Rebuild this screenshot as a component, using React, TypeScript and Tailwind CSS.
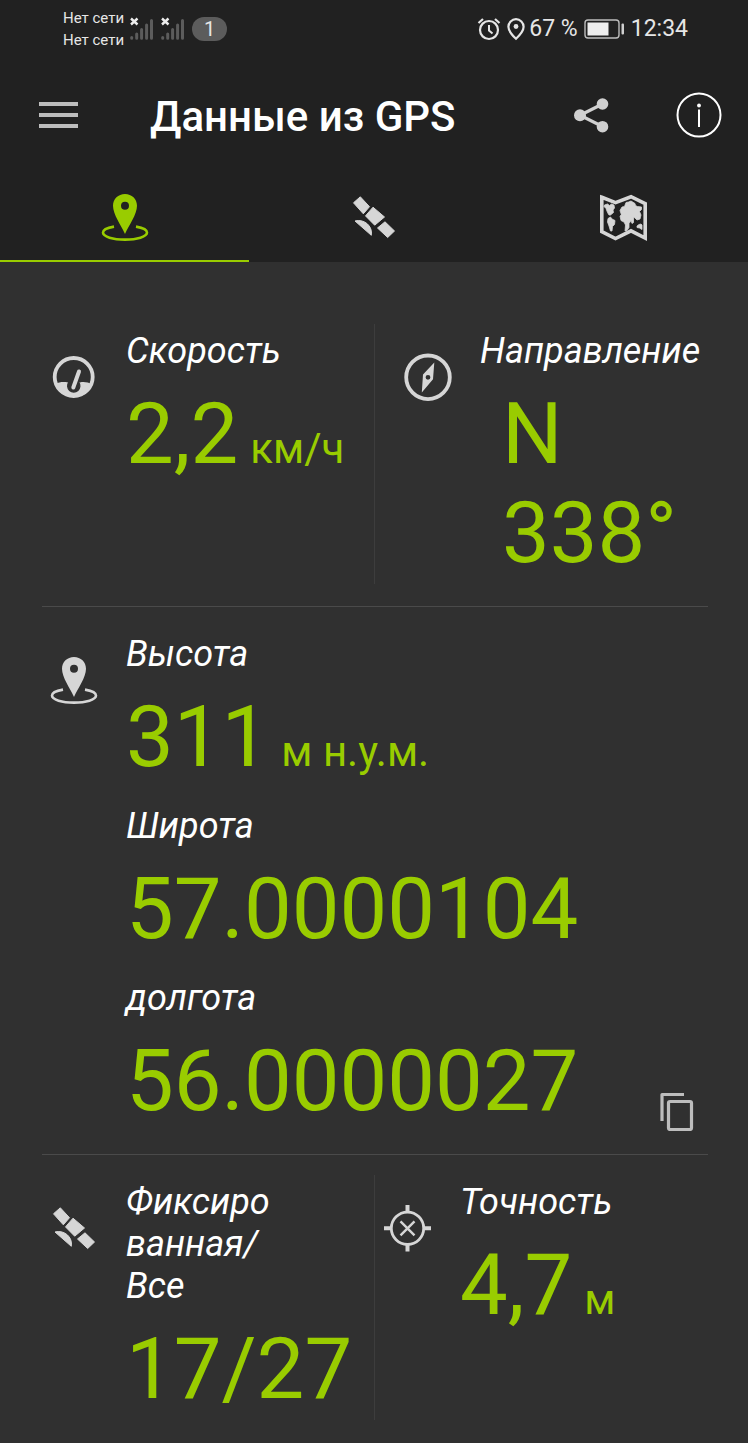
import type { ReactNode } from 'react';

function SignalIcon() {
  return (
    <svg width="24" height="24" viewBox="0 0 24 24" aria-hidden="true">
      <g stroke="#5c5c5c" strokeWidth="3" strokeLinecap="round">
        <path d="M1.7 20.5v.8M6.7 17v4.3M11.6 12.5v8.8M16.6 8v13.3M21.5 3.5v17.8" />
      </g>
      <path d="M1 1.5l6.5 6M7.5 1.5l-6.5 6" stroke="#eeeeee" strokeWidth="2.4" />
    </svg>
  );
}

function AlarmIcon() {
  return (
    <svg width="24" height="24" viewBox="0 0 24 24" fill="none" stroke="#e6e6e6" aria-hidden="true">
      <circle cx="12" cy="13" r="9" strokeWidth="2.2" />
      <path d="M12 8v5.5l3.5 3" strokeWidth="2" />
      <path d="M1.5 6l4.5-4M22.5 6l-4.5-4" strokeWidth="2.2" />
    </svg>
  );
}

function LocationIcon() {
  return (
    <svg width="18" height="24" viewBox="0 0 18 24" fill="none" aria-hidden="true">
      <path
        d="M9 2.2a7.6 7.6 0 0 0-7.6 7.6C1.4 14.5 5.5 18.5 9 21.8c3.5-3.3 7.6-7.3 7.6-12A7.6 7.6 0 0 0 9 2.2z"
        stroke="#e6e6e6"
        strokeWidth="2.2"
      />
      <circle cx="9" cy="9.5" r="2.4" fill="#e6e6e6" />
    </svg>
  );
}

function BatteryIcon() {
  return (
    <svg width="41" height="20" viewBox="0 0 41 20" fill="none" aria-hidden="true">
      <rect x="1" y="1" width="34" height="18" rx="3" stroke="#bdbdbd" strokeWidth="1.4" />
      <rect x="3.5" y="3.5" width="21" height="13" fill="#eeeeee" />
      <rect x="37.5" y="4.5" width="2.5" height="11" rx="1" fill="#cfcfcf" />
    </svg>
  );
}

function PinIcon() {
  return (
    <svg width="48" height="48" viewBox="0 0 48 48" fill="currentColor" aria-hidden="true">
      <path
        fillRule="evenodd"
        d="M24 1C17.2 1 12 6 12 12.7C12 21.5 20 32 24 41C28 32 36 21.5 36 12.7C36 6 30.8 1 24 1zM24 8.8a4 4 0 1 1 0 8a4 4 0 1 1 0-8z"
      />
      <path
        d="M13 33.6C6 34.8 2 37 2 39.6C2 43.8 12 46.6 24 46.6S46 43.8 46 39.6C46 37 42 34.8 35 33.6"
        fill="none"
        stroke="currentColor"
        strokeWidth="2.6"
      />
    </svg>
  );
}

function SatelliteIcon() {
  return (
    <svg
      width="48"
      height="48"
      viewBox="0 0 48 48"
      fill="currentColor"
      stroke="currentColor"
      strokeLinejoin="round"
      aria-hidden="true"
    >
      <path d="M3.5 9.8L10.3 3.8L19.5 13.7L13.3 20.8z" />
      <path d="M15.5 22.9L23 14.2L34.5 24L24.7 32.2z" />
      <path d="M27.5 35L35 28.8L44.5 38L37.7 44.5z" />
      <path d="M5 28C14 25.5 23 33 21.3 42.3z" />
    </svg>
  );
}

function MapIcon() {
  return (
    <svg width="48" height="48" viewBox="0 0 48 48" fill="currentColor" aria-hidden="true">
      <path
        d="M2.8 4.3L16.5 9.6L32 3.7L46.2 10.7V45L32 37.8L16.5 45.6L2.8 38.7z"
        fill="none"
        stroke="currentColor"
        strokeWidth="3.6"
      />
      <g stroke="currentColor" strokeWidth="0.8" strokeLinejoin="round">
        {/* Americas */}
        <path d="M5.5 12l3-1 2 1.500 2-1.500 2.500 1 .5 3-1.500 2 .5 2.500-3 2.500-1.500 0-1.500-2.500-1.500-4-2-2z" />
        <path d="M9 25.500l2.500-1.500 1.500 2 3 1.500-.5 4-2 2-.5 4.500-1.500 0L10 33l-1.500-4z" />
        {/* Eurasia */}
        <path d="M21 17.500l2-3.500 2.500-.5 1.500-4 2.500-.5 2.500-1 4 2.500.5 2 2 1 4 .5v2.500l-2 2 1.500 3.500-1 4-3 1-2-2-1.500-1v5.500l-1.500 1-2-6-6-1-2.500-1.500z" />
        {/* Africa */}
        <path d="M21 23l2.500-2 4-.5 4 2 1 3-1 3-1.500 2v4l-2 3-2 .5.5-6-1.500-3-3-1.500z" />
        {/* Australia */}
        <path d="M38 33l2-1.500 2-.5 1 1v4.500l-2.500-1.500-2.500-.5z" />
      </g>
    </svg>
  );
}

function SpeedIcon() {
  return (
    <svg width="48" height="48" viewBox="0 0 48 48" aria-hidden="true">
      <circle cx="23.7" cy="24" r="19" fill="none" stroke="currentColor" strokeWidth="3.8" />
      <path
        d="M5.5 31C9 29 14 28.5 18 29.5H30C34 28.5 38 29.5 42 31C39 40 32 44 23.7 44S8.5 40 5.5 31z"
        fill="currentColor"
      />
      <path d="M19 29.3a6 6 0 1 0 9.5 0z" fill="#303030" stroke="#303030" strokeWidth="1.5" />
      <path d="M29 18.5L23.3 34.5" stroke="currentColor" strokeWidth="4" strokeLinecap="round" />
    </svg>
  );
}

function CompassIcon() {
  return (
    <svg width="48" height="48" viewBox="0 0 48 48" aria-hidden="true">
      <circle cx="24" cy="24.3" r="21.8" fill="none" stroke="currentColor" strokeWidth="3.8" />
      <path
        fillRule="evenodd"
        d="M30.3 9.5L29 26.2L17.8 39.5L19 21.5zM24 21.9a2.4 2.4 0 1 0 0 4.8a2.4 2.4 0 1 0 0-4.8z"
        fill="currentColor"
      />
    </svg>
  );
}

function AccuracyIcon() {
  return (
    <svg width="48" height="48" viewBox="0 0 48 48" fill="none" stroke="currentColor" aria-hidden="true">
      <circle cx="23.5" cy="24.3" r="16.2" strokeWidth="2.8" />
      <path d="M23.5 1v7M23.5 40.6v7M0 24.3h7M40 24.3h7" strokeWidth="4" />
      <path d="M16.5 17.3l14 14M30.5 17.3l-14 14" strokeWidth="2.4" />
    </svg>
  );
}

function CopyIcon() {
  return (
    <svg
      width="36"
      height="40"
      viewBox="0 0 36 40"
      fill="none"
      stroke="currentColor"
      strokeWidth="3.2"
      strokeLinejoin="round"
      aria-hidden="true"
    >
      <path d="M26 3.5H4V30" />
      <rect x="10.5" y="10.5" width="23" height="28" rx="1.5" />
    </svg>
  );
}

const tabs = [
  { id: 'location', label: 'Местоположение', icon: <PinIcon />, active: true },
  { id: 'satellites', label: 'Спутники', icon: <SatelliteIcon />, active: false },
  { id: 'map', label: 'Карта', icon: <MapIcon />, active: false },
];

function Label({ children }: { children: ReactNode }) {
  return <h2 className="text-[36px] leading-[42px] italic text-white">{children}</h2>;
}

function Value({ children, unit }: { children: ReactNode; unit?: string }) {
  return (
    <p className="mt-[13px] text-[85px] leading-[99px] text-[#99cc00] whitespace-nowrap">
      {children}
      {unit && <span className="ml-3 text-[42px] leading-none">{unit}</span>}
    </p>
  );
}

function Metric({ icon, children }: { icon: ReactNode; children: ReactNode }) {
  return (
    <div className="flex items-start gap-7">
      <div className="mt-[23px] shrink-0 text-[#d6d6d6]">{icon}</div>
      <div className="min-w-0 grow">{children}</div>
    </div>
  );
}

export default function App() {
  return (
    <div className="min-h-screen bg-[#303030] font-[Roboto,sans-serif]">
      <div className="bg-[#212121]">
        {/* Status bar */}
        <div className="flex items-center justify-between h-[58px] pl-[63px] pr-[60px] text-[#e6e6e6]">
          <div className="flex items-center">
            <div className="text-[15px] leading-[22px] mr-1.5">
              <p>Нет сети</p>
              <p>Нет сети</p>
            </div>
            <div className="flex items-center gap-[7px]">
              <SignalIcon />
              <SignalIcon />
              <span className="w-[35px] h-6 rounded-full bg-[#5c5c5c] text-center text-[20px] leading-6">1</span>
            </div>
          </div>
          <div className="flex items-center text-[23px] leading-7">
            <div className="flex items-center gap-1.5">
              <AlarmIcon />
              <LocationIcon />
            </div>
            <span className="ml-1 mr-1.5">67 %</span>
            <BatteryIcon />
            <span className="ml-1.5">12:34</span>
          </div>
        </div>

        {/* App bar */}
        <header className="flex items-center h-[114px] pl-[39px] pr-[26px]">
          <button type="button" aria-label="Меню" className="flex flex-col gap-[7px] w-[39px]">
            <span className="h-1 w-full bg-[#bdbdbd]" />
            <span className="h-1 w-full bg-[#bdbdbd]" />
            <span className="h-1 w-full bg-[#bdbdbd]" />
          </button>
          <h1 className="ml-[72px] pt-1 grow text-[42px] leading-[50px] font-medium text-white whitespace-nowrap">
            Данные из GPS
          </h1>
          <button type="button" aria-label="Поделиться" className="text-[#d0d0d0]">
            <svg width="38" height="38" viewBox="0 0 38 38" fill="currentColor" aria-hidden="true">
              <path d="M30.5 8L8 19.3L30.5 30.5" fill="none" stroke="currentColor" strokeWidth="3.2" />
              <circle cx="8" cy="19.3" r="6" />
              <circle cx="30.5" cy="8" r="5.8" />
              <circle cx="30.5" cy="30.7" r="5.8" />
            </svg>
          </button>
          <button type="button" aria-label="Информация" className="ml-[66px] text-white">
            <svg width="46" height="46" viewBox="0 0 46 46" fill="none" stroke="currentColor" aria-hidden="true">
              <circle cx="23" cy="23" r="21.5" strokeWidth="2" />
              <path d="M23 17.5V35" strokeWidth="2" />
              <circle cx="23" cy="13.5" r="1.9" fill="currentColor" stroke="none" />
            </svg>
          </button>
        </header>

        <nav className="grid grid-cols-3">
          {tabs.map((tab) => (
            <button
              key={tab.id}
              type="button"
              aria-label={tab.label}
              className={
                tab.active
                  ? 'flex justify-center h-[90px] pt-[21px] border-b-2 border-[#99cc00] text-[#99cc00]'
                  : 'flex justify-center h-[90px] pt-[21px] border-b-2 border-transparent text-[#d6d6d6]'
              }
            >
              {tab.icon}
            </button>
          ))}
        </nav>
      </div>

      <main className="pl-[42px] pr-10 pt-[62px]">
        {/* Speed and heading */}
        <section className="grid grid-cols-2 pb-[22px] border-b border-[#4a4a4a]">
          <div className="pl-2 pt-1.5 pb-px border-r border-[#3d3d3d]">
            <Metric icon={<SpeedIcon />}>
              <Label>Скорость</Label>
              <Value unit="км/ч">2,2</Value>
            </Metric>
          </div>
          <div className="pl-[29px] pt-1.5 pb-px">
            <Metric icon={<CompassIcon />}>
              <Label>Направление</Label>
              <div className="pl-[22px]">
                <Value>
                  N<br />
                  338°
                </Value>
              </div>
            </Metric>
          </div>
        </section>

        {/* Position */}
        <section className="pl-2 pt-[26px] pb-[23px] border-b border-[#4a4a4a]">
          <Metric icon={<PinIcon />}>
            <div className="flex flex-col gap-[18px]">
              <div>
                <Label>Высота</Label>
                <Value unit="м н.у.м.">311</Value>
              </div>
              <div>
                <Label>Широта</Label>
                <Value>57.0000104</Value>
              </div>
              <div>
                <Label>долгота</Label>
                <div className="flex items-end justify-between pr-3.5">
                  <Value>56.0000027</Value>
                  <button type="button" aria-label="Копировать" className="text-[#bdbdbd]">
                    <CopyIcon />
                  </button>
                </div>
              </div>
            </div>
          </Metric>
        </section>

        {/* Satellites and accuracy */}
        <section className="grid grid-cols-2 pt-5 pb-[22px]">
          <div className="pl-2 pt-1.5 pb-px border-r border-[#3d3d3d]">
            <Metric icon={<SatelliteIcon />}>
              <Label>
                Фиксиро
                <br />
                ванная/
                <br />
                Все
              </Label>
              <Value>17/27</Value>
            </Metric>
          </div>
          <div className="pl-[9px] pt-1.5 pb-px">
            <Metric icon={<AccuracyIcon />}>
              <Label>Точность</Label>
              <Value unit="м">4,7</Value>
            </Metric>
          </div>
        </section>
      </main>
    </div>
  );
}
